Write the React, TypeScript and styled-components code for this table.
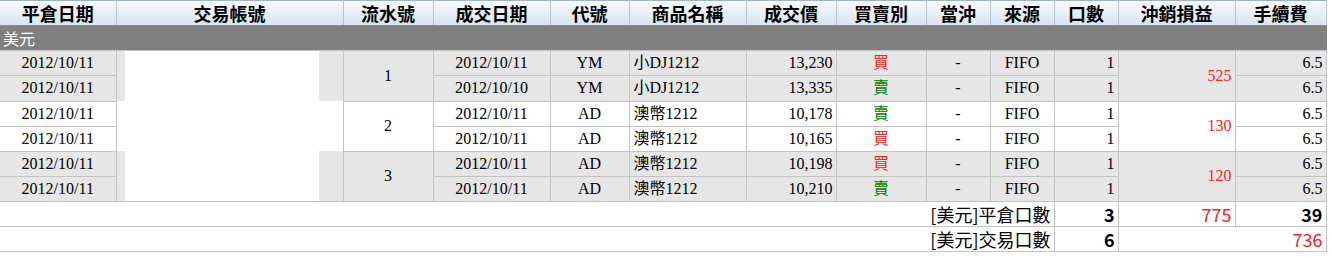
import React from "react";
import styled, { createGlobalStyle } from "styled-components";

const GlobalStyle = createGlobalStyle`
  html, body { margin: 0; padding: 0; background: #ffffff; }
  body { font-family: "Liberation Serif", "Noto Sans CJK TC", serif; }
`;

const SERIF = `"Liberation Serif", "Noto Sans CJK TC", serif`;
const SANS = `"Noto Sans CJK TC", "Liberation Sans", sans-serif`;
const BORDER = "#c3c3c3";

const Table = styled.table`
  border-collapse: collapse;
  table-layout: fixed;
  width: 1326px;
  font-family: ${SERIF};
  font-size: 16px;
  color: #000;
`;

const HeadRow = styled.tr`
  background: linear-gradient(#f7fafd 0%, #e9f0f8 45%, #d7e3ef 100%);
`;

const Th = styled.th`
  height: 24px;
  padding: 0;
  font-family: ${SANS};
  font-weight: 700;
  font-size: 18px;
  line-height: 24px;
  text-align: center;
  color: #000;
  border-top: 1px solid #9fb3c8;
  border-bottom: 1px solid #8a8a8a;
  border-right: 1px solid #b7c3d0;
  border-left: 1px solid #b7c3d0;
  &:first-child { border-left: none; }
`;

const BandCell = styled.td`
  height: 24px;
  padding: 0 0 0 3px;
  background: #808080;
  color: #ffffff;
  font-family: ${SANS};
  font-size: 16px;
  line-height: 24px;
  border-bottom: 1px solid ${BORDER};
  border-right: 1px solid #808080;
`;

type Align = "left" | "center" | "right";

const DataRow = styled.tr<{ $shade: boolean }>`
  background: ${(p) => (p.$shade ? "#e6e6e6" : "#ffffff")};
`;

const Td = styled.td<{ $align?: Align; $color?: string }>`
  height: 24px;
  padding: ${(p) => (p.$align === "left" ? "0 0 0 4px" : p.$align === "right" ? "0 3px 0 0" : "0")};
  line-height: 24px;
  text-align: ${(p) => p.$align || "center"};
  color: ${(p) => p.$color || "#000"};
  border: 1px solid ${BORDER};
  white-space: nowrap;
  &:first-child { border-left: none; }
`;

const AccountCell = styled.td`
  padding: 0 24px 0 8px;
  border-left: 1px solid ${BORDER};
  border-right: 1px solid ${BORDER};
  border-top: none;
  border-bottom: none;
`;

const Redacted = styled.div`
  height: 50px;
  background: #ffffff;
`;

const SumRow = styled.tr`
  background: #ffffff;
`;

const SumLabel = styled.td`
  height: 24px;
  padding: 0 3px 0 0;
  text-align: right;
  font-family: ${SANS};
  font-size: 18px;
  line-height: 24px;
  border-top: 1px solid ${BORDER};
  border-bottom: 1px solid ${BORDER};
  border-right: 1px solid ${BORDER};
  border-left: none;
`;

const SumValue = styled.td<{ $red?: boolean }>`
  height: 24px;
  padding: 0 3px 0 0;
  text-align: right;
  font-family: ${SANS};
  font-size: 18px;
  font-weight: ${(p) => (p.$red ? 400 : 700)};
  line-height: 24px;
  color: ${(p) => (p.$red ? "#ff1a1a" : "#000")};
  border: 1px solid ${BORDER};
`;

const widths = [116, 227, 90, 117, 79, 117, 90, 90, 64, 64, 64, 117, 91];
const headers = [
  "平倉日期",
  "交易帳號",
  "流水號",
  "成交日期",
  "代號",
  "商品名稱",
  "成交價",
  "買賣別",
  "當沖",
  "來源",
  "口數",
  "沖銷損益",
  "手續費",
];

type Leg = {
  close: string;
  trade: string;
  code: string;
  name: string;
  price: string;
  buy: boolean;
};

type Group = { serial: string; pnl: string; legs: [Leg, Leg] };

const groups: Group[] = [
  {
    serial: "1",
    pnl: "525",
    legs: [
      { close: "2012/10/11", trade: "2012/10/11", code: "YM", name: "小DJ1212", price: "13,230", buy: true },
      { close: "2012/10/11", trade: "2012/10/10", code: "YM", name: "小DJ1212", price: "13,335", buy: false },
    ],
  },
  {
    serial: "2",
    pnl: "130",
    legs: [
      { close: "2012/10/11", trade: "2012/10/11", code: "AD", name: "澳幣1212", price: "10,178", buy: false },
      { close: "2012/10/11", trade: "2012/10/11", code: "AD", name: "澳幣1212", price: "10,165", buy: true },
    ],
  },
  {
    serial: "3",
    pnl: "120",
    legs: [
      { close: "2012/10/11", trade: "2012/10/11", code: "AD", name: "澳幣1212", price: "10,198", buy: true },
      { close: "2012/10/11", trade: "2012/10/11", code: "AD", name: "澳幣1212", price: "10,210", buy: false },
    ],
  },
];

const RED = "#ff2020";
const GREEN = "#008000";

export default function App() {
  return (
    <>
      <GlobalStyle />
      <Table>
        <colgroup>
          {widths.map((w, i) => (
            <col key={i} style={{ width: w }} />
          ))}
        </colgroup>
        <thead>
          <HeadRow>
            {headers.map((h) => (
              <Th key={h}>{h}</Th>
            ))}
          </HeadRow>
        </thead>
        <tbody>
          <tr>
            <BandCell colSpan={13}>美元</BandCell>
          </tr>
          {groups.map((g, gi) =>
            g.legs.map((leg, li) => (
              <DataRow key={`${gi}-${li}`} $shade={gi % 2 === 0}>
                <Td>{leg.close}</Td>
                {li === 0 && (
                  <AccountCell rowSpan={2}>
                    <Redacted />
                  </AccountCell>
                )}
                {li === 0 && <Td rowSpan={2}>{g.serial}</Td>}
                <Td>{leg.trade}</Td>
                <Td>{leg.code}</Td>
                <Td $align="left">{leg.name}</Td>
                <Td $align="right">{leg.price}</Td>
                <Td $color={leg.buy ? RED : GREEN}>{leg.buy ? "買" : "賣"}</Td>
                <Td>-</Td>
                <Td>FIFO</Td>
                <Td $align="right">1</Td>
                {li === 0 && (
                  <Td rowSpan={2} $align="right" $color={RED}>
                    {g.pnl}
                  </Td>
                )}
                <Td $align="right">6.5</Td>
              </DataRow>
            ))
          )}
          <SumRow>
            <SumLabel colSpan={10}>[美元]平倉口數</SumLabel>
            <SumValue>3</SumValue>
            <SumValue $red>775</SumValue>
            <SumValue>39</SumValue>
          </SumRow>
          <SumRow>
            <SumLabel colSpan={10}>[美元]交易口數</SumLabel>
            <SumValue>6</SumValue>
            <SumValue colSpan={2} $red>
              736
            </SumValue>
          </SumRow>
        </tbody>
      </Table>
    </>
  );
}
